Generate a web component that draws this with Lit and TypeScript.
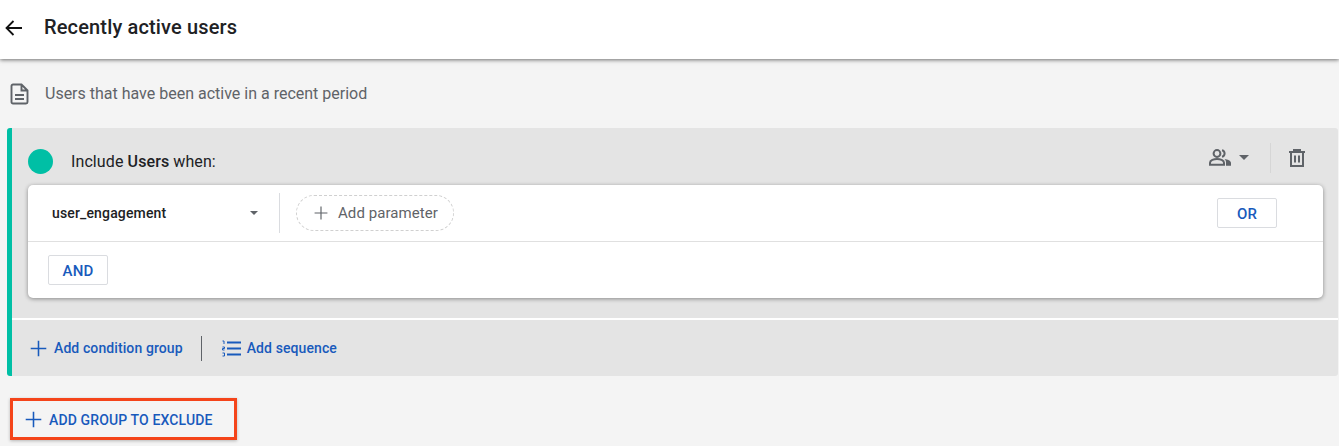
import { LitElement, html, css } from "lit";
import { customElement } from "lit/decorators.js";

const plus = (s: number, c: string, w: number) => html`<svg width=${s} height=${s} viewBox="0 0 24 24"><path d="M12 1V23M1 12H23" stroke=${c} stroke-width=${w} fill="none"/></svg>`;

@customElement("app-root")
export class AppRoot extends LitElement {
  static styles = css`
    :host { display: block; width: 1339px; height: 446px; background: #f4f4f4; overflow: hidden; font-family: Roboto, "Noto Sans", sans-serif; color: #202124; }
    .header { height: 59px; background: #fff; box-shadow: 0 1px 4px rgba(0,0,0,.55); display: flex; align-items: center; padding-left: 5px; position: relative; box-sizing: border-box; }
    .back { display: block; margin-right: 22px; margin-bottom: 4px; }
    .title { font-size: 20px; font-weight: 500; letter-spacing: .15px; color: #202124; padding-bottom: 5px; }
    .desc { height: 69px; box-sizing: border-box; display: flex; align-items: center; padding-left: 10px; color: #5f6368; font-size: 16px; }
    .desc svg { margin-right: 16px; }
    .group { margin-left: 7px; margin-right: 1px; height: 248px; background: #e4e4e4; border-left: 5px solid #00bfa5; border-radius: 3px; box-sizing: border-box; display: flex; flex-direction: column; }
    .top { height: 190px; border-bottom: 2px solid #fff; padding: 0 15px 0 16px; }
    .inc { height: 57px; display: flex; align-items: center; font-size: 16px; letter-spacing: .1px; }
    .dot { width: 25px; height: 25px; border-radius: 50%; background: #00bfa5; margin-right: 18px; margin-top: 9px; }
    .inc-text { margin-top: 9px; }
    .inc-text b { font-weight: 500; }
    .tools { margin-left: auto; display: flex; align-items: center; margin-right: 18px; margin-top: 2px; }
    .vsep { width: 1px; height: 30px; background: #d6d6d6; margin: 0 18px 0 21px; }
    .caret { width: 0; height: 0; border-left: 5px solid transparent; border-right: 5px solid transparent; border-top: 5px solid #5f6368; margin-left: 8px; }
    .card { height: 113px; background: #fff; border-radius: 5px; box-shadow: 0 1px 4px rgba(0,0,0,.4); }
    .row { height: 56px; border-bottom: 1px solid #e0e0e0; display: flex; align-items: center; }
    .select { width: 252px; padding-left: 24px; padding-right: 21px; box-sizing: border-box; display: flex; align-items: center; justify-content: space-between; font-size: 14px; font-weight: 500; letter-spacing: .15px; height: 40px; border-right: 1px solid #dadce0; }
    .small-caret { width: 0; height: 0; border-left: 4px solid transparent; border-right: 4px solid transparent; border-top: 4px solid #5f6368; }
    .param { margin-left: 16px; width: 158px; height: 36px; box-sizing: border-box; border: 1px dashed #d0d0d0; border-radius: 18px; display: flex; align-items: center; padding-left: 17px; color: #5f6368; font-size: 15px; letter-spacing: .07px; gap: 10px; }
    .btn { width: 60px; height: 30px; box-sizing: border-box; border: 1px solid #dadce0; border-radius: 2px; background: #fff; display: flex; align-items: center; justify-content: center; padding-top: 1px; color: #185abc; font-size: 15px; font-weight: 500; letter-spacing: .2px; }
    .or { margin-left: auto; margin-right: 46px; }
    .androw { padding: 13px 0 0 20px; }
    .foot { flex: 1; display: flex; align-items: center; padding-left: 18px; color: #185abc; font-size: 14px; font-weight: 500; letter-spacing: .1px; }
    .foot svg { margin-right: 7px; }
    .foot .seq { margin-right: 6px; }
    .fsep { width: 1px; height: 25px; background: #5f6368; margin: 0 20px 0 18px; }
    .exclude { margin: 22px 0 0 10px; width: 227px; height: 42px; box-sizing: border-box; border: 3px solid #f4441a; display: flex; align-items: center; padding-left: 12px; color: #185abc; font-size: 14px; font-weight: 500; letter-spacing: .13px; box-shadow: 0 1px 3px rgba(0,0,0,.25); }
    .exclude svg { margin-right: 7px; }
    .exclude span { padding-top: 2px; }
  `;

  render() {
    return html`
      <div class="header">
        <svg class="back" width="17" height="16" viewBox="0 0 17 16"><path d="M17 8H1.5M8.5 1L1.5 8L8.5 15" stroke="#111" stroke-width="1.8" fill="none"/></svg>
        <div class="title">Recently active users</div>
      </div>
      <div class="desc">
        <svg width="19" height="22" viewBox="0 0 19 22"><path d="M3 1.500H11.500L17.500 7.500V19a1.500 1.500 0 0 1-1.500 1.500H3A1.500 1.500 0 0 1 1.500 19V3A1.500 1.500 0 0 1 3 1.500ZM11.500 1.500V7.500H17.500M5 12H14M5 16H14" stroke="#5f6368" stroke-width="1.900" fill="none"/></svg>
        Users that have been active in a recent period
      </div>
      <div class="group">
        <div class="top">
          <div class="inc">
            <div class="dot"></div>
            <div class="inc-text">Include <b>Users</b> when:</div>
            <div class="tools">
              <svg width="22" height="17" viewBox="0 0 22 17"><circle cx="8" cy="4.500" r="3.400" stroke="#5f6368" stroke-width="2" fill="none"/><path d="M1 15.800V13.800C1 11.300 5 10 8 10S15 11.300 15 13.800V15.800Z" stroke="#5f6368" stroke-width="2" fill="none"/><path d="M13 1.200A3.400 3.400 0 0 1 13 7.800" stroke="#5f6368" stroke-width="2" fill="none"/><path d="M15.500 10C18.500 10.500 22 11.500 22 14V16.800H17V13.500C17 12 16.500 11 15.500 10Z" fill="#5f6368"/></svg>
              <div class="caret"></div>
              <div class="vsep"></div>
              <svg width="16" height="18" viewBox="0 0 16 18"><path d="M0 3H16M5 3V1H11V3M2 3V17H14V3M6 6.500V13.500M10 6.500V13.500" stroke="#5f6368" stroke-width="2" fill="none"/></svg>
            </div>
          </div>
          <div class="card">
            <div class="row">
              <div class="select">user_engagement<span class="small-caret"></span></div>
              <div class="param">${plus(14, "#5f6368", 2)}Add parameter</div>
              <div class="btn or">OR</div>
            </div>
            <div class="androw"><div class="btn">AND</div></div>
          </div>
        </div>
        <div class="foot">
          ${plus(17, "#185abc", 2.2)}Add condition group
          <div class="fsep"></div>
          <svg class="seq" width="19" height="17" viewBox="0 0 19 17"><path d="M5 2.500H19M5 8.500H19M5 14.500H19" stroke="#185abc" stroke-width="1.800"/><path d="M0.500 1H2V4M0.500 7H2.500V8.500H0.500V10H2.500M0.500 13H2.500V16H0.500" stroke="#185abc" stroke-width="1" fill="none"/></svg>
          Add sequence
        </div>
      </div>
      <div class="exclude">${plus(17, "#185abc", 2.2)}<span>ADD GROUP TO EXCLUDE</span></div>
    `;
  }
}
